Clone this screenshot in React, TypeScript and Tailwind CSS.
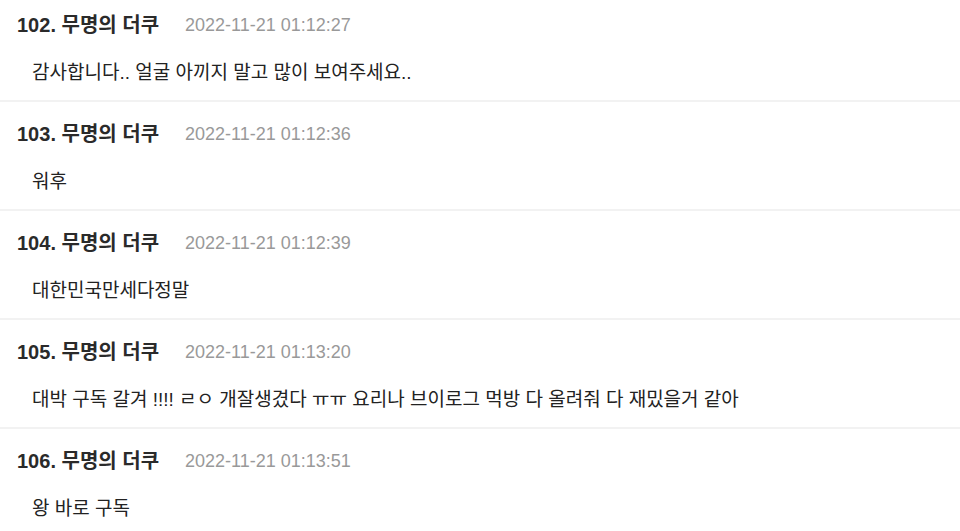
const comments = [
  { no: 102, name: "무명의 더쿠", date: "2022-11-21 01:12:27", body: "감사합니다.. 얼굴 아끼지 말고 많이 보여주세요.." },
  { no: 103, name: "무명의 더쿠", date: "2022-11-21 01:12:36", body: "워후" },
  { no: 104, name: "무명의 더쿠", date: "2022-11-21 01:12:39", body: "대한민국만세다정말" },
  {
    no: 105,
    name: "무명의 더쿠",
    date: "2022-11-21 01:13:20",
    body: "대박 구독 갈겨 !!!! ㄹㅇ 개잘생겼다 ㅠㅠ 요리나 브이로그 먹방 다 올려줘 다 재밌을거 같아",
  },
  { no: 106, name: "무명의 더쿠", date: "2022-11-21 01:13:51", body: "왕 바로 구독" },
];

export default function App() {
  return (
    <div className="h-[531px] w-[960px] overflow-hidden bg-white font-['Liberation_Sans','Noto_Sans_CJK_KR',sans-serif]">
      <ul className="-mt-[7px]">
        {comments.map((c) => (
          <li key={c.no} className="border-b-2 border-[#f2f2f2] pb-[15px] pl-[17px] pt-[20px]">
            <div className="flex items-center leading-[24px]">
              <span className="text-[20px] font-bold text-[#2a2a2a]">
                {c.no}. {c.name}
              </span>
              <span className="ml-[26px] text-[18px] text-[#999]">{c.date}</span>
            </div>
            <p className="mt-[24px] pl-[15px] text-[19px] leading-[24px] text-[#222]">{c.body}</p>
          </li>
        ))}
      </ul>
    </div>
  );
}
